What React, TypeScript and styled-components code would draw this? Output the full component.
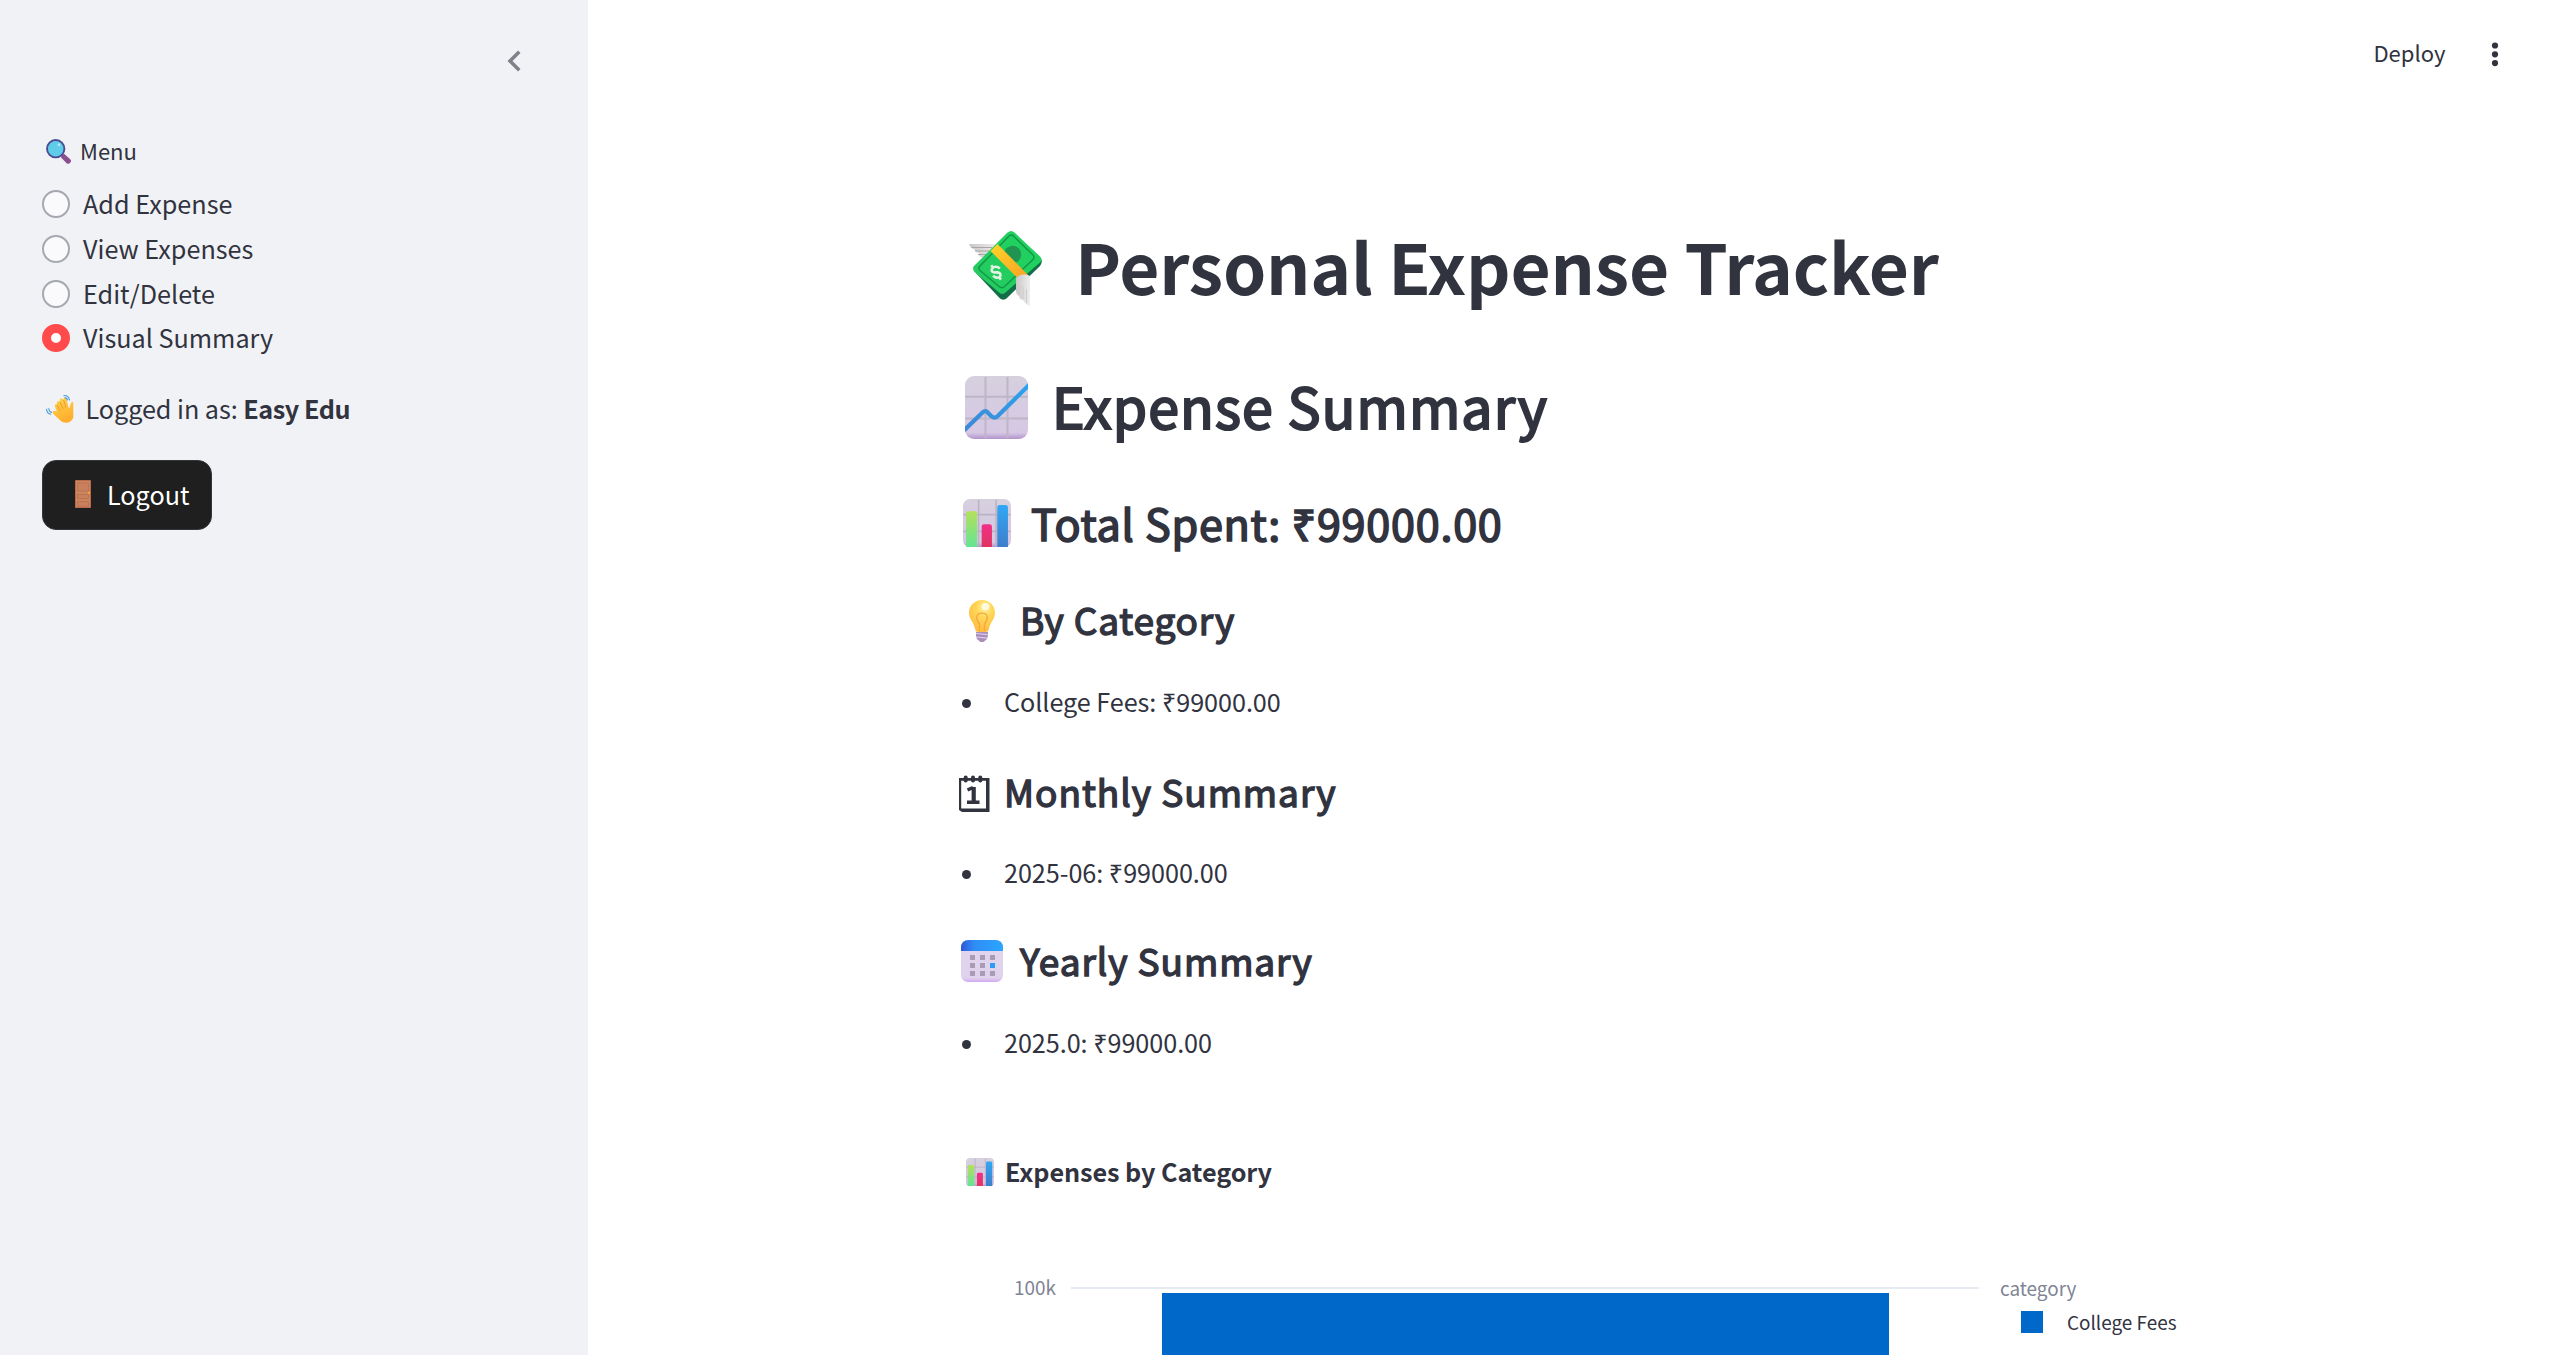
import React from 'react';
import styled, { createGlobalStyle } from 'styled-components';

const GlobalStyle = createGlobalStyle`
  * { box-sizing: border-box; }
  body {
    margin: 0;
    background: #ffffff;
    color: #31333f;
    font-family: "Noto Sans CJK JP", "Noto Sans", sans-serif;
    overflow: hidden;
  }
`;

const Page = styled.div`
  display: flex;
  height: 1355px;
  overflow: hidden;
`;

const Sidebar = styled.aside`
  display: flex;
  flex-direction: column;
  flex: none;
  width: 588px;
  padding: 42px;
  background: #f0f2f6;
`;

const SidebarHeader = styled.div`
  display: flex;
  justify-content: flex-end;
  height: 91px;
  padding: 8px 25px 0 0;
`;

const MenuLabel = styled.div`
  display: flex;
  height: 36px;
  font-size: 22.05px;
  line-height: 35px;
`;

const RadioGroup = styled.div`
  display: flex;
  flex-direction: column;
  margin-top: 13px;
`;

const RadioRow = styled.label`
  display: flex;
  align-items: center;
  height: 44.7px;
  gap: 13px;
  font-size: 25.2px;
  line-height: 42px;
`;

const RadioName = styled.span`
  padding-bottom: 2px;
`;

const RadioDot = styled.span<{ $checked?: boolean }>`
  width: 28px;
  height: 28px;
  border-radius: 50%;
  border: ${(p) => (p.$checked ? '9px solid #ff4b4b' : '2px solid #a6a8b0')};
  background: ${(p) => (p.$checked ? '#ffffff' : '#fafafc')};
`;

const LoggedIn = styled.div`
  display: flex;
  margin-top: 26px;
  height: 44px;
  font-size: 25.2px;
  line-height: 43px;
  letter-spacing: -0.002em;
  white-space: pre;
`;

const UserName = styled.b`
  letter-spacing: -0.018em;
`;

const LogoutButton = styled.button`
  display: flex;
  width: 170px;
  height: 70px;
  margin-top: 29px;
  padding: 0;
  border: 1.5px solid #35363a;
  border-radius: 14px;
  background: #1f1f1f;
  color: #ffffff;
  font-family: inherit;
  font-size: 25.2px;
  line-height: 66px;
`;

const Main = styled.main`
  display: flex;
  flex-direction: column;
  flex: 1;
`;

const TopBar = styled.header`
  display: flex;
  flex: none;
  justify-content: flex-end;
  height: 105px;
  padding: 34px 60.5px 0 0;
  font-size: 22.05px;
  line-height: 37px;
`;

const Content = styled.section`
  display: flex;
  flex-direction: column;
  flex: none;
  width: 1232px;
  margin-left: 369px;
  padding-top: 114px;
`;

const Glyph = styled.span<{ $top?: number; $left?: number; $right?: number }>`
  display: block;
  flex: none;
  margin: ${(p) => p.$top ?? 0}px ${(p) => p.$right ?? 0}px 0 ${(p) => p.$left ?? 0}px;
  line-height: 0;
  svg { display: block; overflow: visible; }
`;

const Heading = styled.div<{ $size: number; $line: number; $mt?: number; $bold?: boolean; $track?: number }>`
  display: flex;
  height: ${(p) => p.$line}px;
  margin-top: ${(p) => p.$mt ?? 0}px;
  font-size: ${(p) => p.$size}px;
  line-height: ${(p) => p.$line}px;
  font-weight: ${(p) => (p.$bold ? 700 : 400)};
  -webkit-text-stroke: ${(p) => (p.$bold ? '0' : '0.038em #31333f')};
  letter-spacing: ${(p) => p.$track ?? 0}em;
  white-space: pre;
`;

const List = styled.ul<{ $mt: number }>`
  margin: ${(p) => p.$mt}px 0 0;
  padding: 0;
  list-style: none;
`;

const Item = styled.li`
  display: flex;
  align-items: center;
  height: 44px;
  padding-left: 4.5px;
  gap: 33px;
  font-size: 25.2px;
  letter-spacing: -0.002em;
  line-height: 44px;
  &::before {
    content: "";
    width: 9.5px;
    height: 9.5px;
    margin-top: 5px;
    border-radius: 50%;
    background: #31333f;
  }
`;

const Chart = styled.div`
  display: flex;
  height: 90px;
  margin-top: 85px;
  font-size: 18.9px;
  line-height: 28px;
  color: #808495;
`;

const AxisLabel = styled.div`
  width: 114px;
  padding-right: 15px;
  text-align: right;
`;

const Plot = styled.div`
  width: 908px;
  height: 90px;
  margin-top: 14px;
  border-top: 2px solid #e6eaf1;
  padding: 4px 90px 0 91px;
`;

const Bar = styled.div`
  height: 80px;
  background: #0068c9;
`;

const Legend = styled.div`
  margin: 1px 0 0 21px;
`;

const LegendRow = styled.div`
  display: flex;
  align-items: center;
  height: 28px;
  margin-top: 6px;
  padding-left: 21px;
  gap: 24px;
  color: #31333f;
`;

const Swatch = styled.span`
  width: 22px;
  height: 22px;
  background: #0068c9;
  margin-top: -1px;
`;

const Magnifier = () => (
  <svg width="25" height="25" viewBox="0 0 25 25">
    <path d="M15.500 16.500 18 14.800l6 5.200a2.600 2.600 0 0 1-3.600 4L15 18.600z" fill="#8b4f8f" />
    <circle cx="9.700" cy="9.700" r="8.700" fill="#5fcdea" stroke="#4c4a91" strokeWidth="1.900" />
    <circle cx="13" cy="5.800" r="1.400" fill="#b4ecfb" />
  </svg>
);

const Wave = () => (
  <svg width="28" height="28" viewBox="0 0 28 28">
    <defs>
      <linearGradient id="hand" x1="0" y1="0" x2="0.4" y2="1">
        <stop offset="0" stopColor="#ffd54a" />
        <stop offset="1" stopColor="#ffae2e" />
      </linearGradient>
    </defs>
    <path d="M27.300 7.200c-1.800-1-2.800.8-3.500 5.200l-1.200.3-2-8.700c-.8-2.300-3.300-1.600-3.100.5l-1.400-.8c-1.900-.8-3 1-2.100 2.800l-1.600-.3c-1.700 0-2 1.600-1.300 3.100-1.600-.7-2.900.8-2 2.600l1.700 4.500-1.900-.4c-2.400-.4-2.900 1.700-1.200 3.300l7.700 7.100c4.700 3 10.100 1.200 11.900-3.800z" fill="url(#hand)" />
    <path d="m17.600 5 2.400 7.700M13.900 7l3.300 7M11.100 10l3.200 6" stroke="#e8912b" strokeWidth="0.800" fill="none" />
    <path d="M17.500.6c3.200-.3 5.600 1.600 6.100 4.800M18.600 2.600c1.800 0 2.600 1 3 2.800M.6 13.700c-.1 3.200 1.500 5.200 4.600 5.600M2.800 13.200c0 2.400 1.200 3.800 3.200 4.200" stroke="#4a9bd8" strokeWidth="1.100" fill="none" />
  </svg>
);

const Door = () => (
  <svg width="16" height="28" viewBox="0 0 16 28">
    <rect width="16" height="28" rx="0.8" fill="#b8694a" />
    <rect x="1" y="1" width="14" height="26" fill="#cd8560" />
    <path d="M2.600 2.800h10.800v8.200H2.600zM2.600 14.600h10.800v4H2.600zM2.600 21.600h10.800v4.600H2.600z" fill="#c9805d" stroke="#b46d4d" strokeWidth="0.700" />
    <circle cx="14" cy="12.800" r="1.100" fill="#ffa726" />
  </svg>
);

const Money = () => (
  <svg width="73" height="75" viewBox="0 0 73 75">
    <defs>
      <linearGradient id="wing" x1="0" y1="0" x2="1" y2="0">
        <stop offset="0" stopColor="#c9c6c6" />
        <stop offset="1" stopColor="#f0eeee" />
      </linearGradient>
      <linearGradient id="band" x1="0" y1="0" x2="1" y2="1">
        <stop offset="0" stopColor="#ffd42a" />
        <stop offset="1" stopColor="#f9a124" />
      </linearGradient>
      <linearGradient id="note" x1="1" y1="0" x2="0" y2="1">
        <stop offset="0" stopColor="#1fd45f" />
        <stop offset="1" stopColor="#25c960" />
      </linearGradient>
    </defs>
    <path d="M0 13h28L14 27l-4-2v-3l-3-1-2-3-3-1z" fill="url(#wing)" />
    <path d="M3 16.500h20M6 20h14M9 23.500h8" stroke="#aaa6a6" strokeWidth="1.100" />
    <path d="M7 42 68 23l4.500 5.500c.6 3-.2 5-2 7L38 67c-2.500 2.200-5 2.200-7.500 0z" fill="#146c49" />
    <path d="M38.500 1.500c2.500-2 5-2 7 0L71 25.500c2 2 2 4 0 6L37 61c-2.500 2.500-5 2.500-7.500 0L5.500 41c-2-2.500-2-5 .5-7z" fill="url(#note)" />
    <path d="M40 5c2-1.500 3-1.500 4.500 0L64 24c1.500 1.700 1.500 3 0 4.500L35.500 55.500c-2 1.800-3.500 1.800-5.500 0L11 39.500c-1.500-1.500-1.500-3 0-4.500z" fill="none" stroke="#149447" strokeWidth="1.400" />
    <circle cx="43.500" cy="23.500" r="8.700" fill="#209451" />
    <path d="m28.500 13-7 7L50 48.500l9.500-4z" fill="url(#band)" />
    <path d="M47 47c3-3.500 8-4.500 14-2v30l-4-2-3-4-3-1-1-3c-2-1-3-3-3-6z" fill="url(#wing)" />
    <path d="M50.500 55v9M54 56v12M57.500 58v14" stroke="#cfcccc" strokeWidth="1.100" />
    <g transform="rotate(-12 27 42)">
      <path d="M31.500 38.500c-1.500-3-5.500-3.500-7.500-1.500-1.800 2.500.5 4.200 3 4.400 3.500.4 5 2.600 3.500 4.600-2.200 2-5.800.5-6.800-2M24 33.500l1.200 2.500M29 46.500l1.500 3" fill="none" stroke="#e4f3e4" strokeWidth="2.600" />
    </g>
  </svg>
);

const Tile = ({ id }: { id: string }) => (
  <>
    <defs>
      <linearGradient id={id} x1="0" y1="0" x2="0" y2="1">
        <stop offset="0" stopColor="#d6d0de" />
        <stop offset="0.9" stopColor="#d6c8e4" />
        <stop offset="1" stopColor="#b294cc" />
      </linearGradient>
    </defs>
    <rect width="63" height="63" rx="9" fill={`url(#${id})`} />
  </>
);

const LineChart = () => (
  <svg width="63" height="63" viewBox="0 0 63 63">
    <defs>
      <linearGradient id="trend" x1="0" y1="1" x2="1" y2="0">
        <stop offset="0" stopColor="#3f87d6" />
        <stop offset="1" stopColor="#2ba3ee" />
      </linearGradient>
      <clipPath id="tileClip"><rect width="63" height="63" rx="9" /></clipPath>
    </defs>
    <Tile id="tileLine" />
    <path d="M20.500 1v61M42.500 1v61M0 20.800h63M0 42.500h63" stroke="#bdb6c6" strokeWidth="2" />
    <path d="M-2 55.500 18 36q2-1.800 4.200 0l4.300 4.300q3.300 2.500 6 0L65 8" fill="none" stroke="url(#trend)" strokeWidth="4.200" clipPath="url(#tileClip)" />
  </svg>
);

const BarChart = ({ id, size }: { id: string; size: number }) => (
  <svg width={size} height={size} viewBox="0 0 63 63">
    <defs>
      <linearGradient id={`${id}g`} x1="0" y1="0" x2="0" y2="1">
        <stop offset="0" stopColor="#b4e05a" />
        <stop offset="1" stopColor="#63e495" />
      </linearGradient>
      <linearGradient id={`${id}r`} x1="0" y1="0" x2="0" y2="1">
        <stop offset="0" stopColor="#f0308a" />
        <stop offset="1" stopColor="#e0345f" />
      </linearGradient>
      <linearGradient id={`${id}b`} x1="0" y1="0" x2="0" y2="1">
        <stop offset="0" stopColor="#30a8f5" />
        <stop offset="1" stopColor="#3f7dcb" />
      </linearGradient>
    </defs>
    <Tile id={`${id}t`} />
    <path d="M20.500 1v61M43.500 1v61M0 20.500h63M0 42.500h63" stroke="#b9b2c2" strokeWidth="2" />
    <path d="M4 63V19q0-3 3-3h8.500q3 0 3 3v44z" fill={`url(#${id}g)`} />
    <path d="M24.500 63V36q0-3 3-3H35q3 0 3 3v27z" fill={`url(#${id}r)`} />
    <path d="M45 63V11q0-3 3-3h8q3 0 3 3v52z" fill={`url(#${id}b)`} />
  </svg>
);

const Bulb = () => (
  <svg width="26" height="42" viewBox="0 0 26 42">
    <defs>
      <radialGradient id="bulb" cx="0.6" cy="0.25" r="0.8">
        <stop offset="0" stopColor="#fff3b0" />
        <stop offset="0.35" stopColor="#ffd95a" />
        <stop offset="1" stopColor="#ffb83d" />
      </radialGradient>
    </defs>
    <path d="M13 0c7.500 0 13 5.500 13 13 0 6-4.500 8.500-6 15.500-.4 2.500-1.500 3.500-3.500 3.500h-7c-2 0-3.100-1-3.500-3.500C4.500 21.500 0 19 0 13 0 5.500 5.500 0 13 0z" fill="url(#bulb)" />
    <path d="M10.500 31v-7C8 21 7.500 19 7.800 16.500c.8-4.500 9.600-4.500 10.400 0 .3 2.500-.2 4.500-2.700 7.500v7" fill="none" stroke="#f5a742" strokeWidth="1.300" />
    <ellipse cx="16.500" cy="6.500" rx="4" ry="3.600" fill="#fffbe6" opacity="0.9" />
    <path d="M7 32h12v3.500l-1 3.500-3.500 3h-3L8 39l-1-3.500z" fill="#a98dbd" />
    <path d="m7 33.500 12 1.200M7.500 37l11 1.200" stroke="#dbcfe3" strokeWidth="1.200" />
  </svg>
);

const DayPad = () => (
  <svg width="31" height="36" viewBox="0 0 31 36">
    <path d="M0 2h30.500v34H3L0 34zM2.200 4.800v27.700H27V4.800z" fill="#31333f" fillRule="evenodd" />
    <path d="M6.700 1.500v3M14 1.500v3M21.300 1.500v3" stroke="#31333f" strokeWidth="4" strokeLinecap="round" />
    <path d="M8.500 14 14 11.500M14.300 11v15M8 26.200h12.500" stroke="#31333f" strokeWidth="3.400" fill="none" />
    <path d="M15.300 11v15" stroke="#31333f" strokeWidth="3" />
  </svg>
);

const Calendar = () => (
  <svg width="42" height="42" viewBox="0 0 42 42">
    <defs>
      <linearGradient id="calTop" x1="0" y1="0" x2="1" y2="0">
        <stop offset="0" stopColor="#2f56d6" />
        <stop offset="0.3" stopColor="#2f8cf5" />
        <stop offset="1" stopColor="#2ba6ff" />
      </linearGradient>
      <linearGradient id="calBody" x1="0" y1="0" x2="0" y2="1">
        <stop offset="0" stopColor="#e2d6ee" />
        <stop offset="0.9" stopColor="#dfd2ec" />
        <stop offset="1" stopColor="#d2a9f0" />
      </linearGradient>
    </defs>
    <rect width="42" height="42" rx="7" fill="url(#calBody)" />
    <path d="M0 11V8q0-8 8-8h26q8 0 8 8v3z" fill="url(#calTop)" />
    <path d="M9 15h5v5H9zM19 15h5v5h-5zM29 15h5v5h-5zM9 23h5v5H9zM19 23h5v5h-5zM9 31h5v5H9zM19 31h5v5h-5zM29 31h5v5h-5z" fill="#a99bb5" />
    <path d="M29 23h5v5h-5z" fill="#2f9bf5" />
  </svg>
);

const options = ['Add Expense', 'View Expenses', 'Edit/Delete', 'Visual Summary'];

export default function App() {
  return (
    <Page>
      <GlobalStyle />
      <Sidebar>
        <SidebarHeader>
          <Glyph>
            <svg width="14" height="22" viewBox="0 0 14 22">
              <path d="M12.300 1.800 3 11l9.300 9.200" fill="none" stroke="#808289" strokeWidth="3.600" />
            </svg>
          </Glyph>
        </SidebarHeader>
        <MenuLabel>
          <Glyph $top={6} $left={4} $right={9}><Magnifier /></Glyph>
          Menu
        </MenuLabel>
        <RadioGroup>
          {options.map((name) => (
            <RadioRow key={name}>
              <RadioDot $checked={name === 'Visual Summary'} />
              <RadioName>{name}</RadioName>
            </RadioRow>
          ))}
        </RadioGroup>
        <LoggedIn>
          <Glyph $top={8} $left={4} $right={11.5}><Wave /></Glyph>
          Logged in as: <UserName>Easy Edu</UserName>
        </LoggedIn>
        <LogoutButton>
          <Glyph $top={19} $left={32} $right={16}><Door /></Glyph>
          Logout
        </LogoutButton>
      </Sidebar>
      <Main>
        <TopBar>
          Deploy
          <Glyph $top={8} $left={45}>
            <svg width="8" height="24" viewBox="0 0 8 24">
              <circle cx="4" cy="3.500" r="3.100" fill="#31333f" />
              <circle cx="4" cy="12.300" r="3.100" fill="#31333f" />
              <circle cx="4" cy="21.100" r="3.100" fill="#31333f" />
            </svg>
          </Glyph>
        </TopBar>
        <Content>
          <Heading $size={69.3} $line={92} $bold $track={-0.003}>
            <Glyph $top={12} $left={12} $right={33}><Money /></Glyph>
            Personal Expense Tracker
          </Heading>
          <Heading $size={55.4} $line={76} $mt={56} $track={0.021}>
            <Glyph $top={9} $left={8} $right={24}><LineChart /></Glyph>
            Expense Summary
          </Heading>
          <Heading $size={43.1} $line={58} $mt={50} $track={0.018}>
            <Glyph $top={6} $left={6} $right={20}><BarChart id="total" size={48} /></Glyph>
            Total Spent: ₹99000.00
          </Heading>
          <Heading $size={37} $line={50} $mt={43} $track={0.022}>
            <Glyph $top={6} $left={12} $right={25}><Bulb /></Glyph>
            By Category
          </Heading>
          <List $mt={35}><Item>College Fees: ₹99000.00</Item></List>
          <Heading $size={37} $line={50} $mt={43} $track={0.026}>
            <Glyph $top={10} $left={2} $right={14}><DayPad /></Glyph>
            Monthly Summary
          </Heading>
          <List $mt={34}><Item>2025-06: ₹99000.00</Item></List>
          <Heading $size={37} $line={50} $mt={41} $track={0.025}>
            <Glyph $top={5} $left={4} $right={17}><Calendar /></Glyph>
            Yearly Summary
          </Heading>
          <List $mt={35}><Item>2025.0: ₹99000.00</Item></List>
          <Heading $size={25.2} $line={34} $mt={90} $bold $track={-0.003}>
            <Glyph $top={4} $left={9} $right={11}><BarChart id="cat" size={28} /></Glyph>
            Expenses by Category
          </Heading>
          <Chart>
            <AxisLabel>100k</AxisLabel>
            <Plot><Bar /></Plot>
            <Legend>
              category
              <LegendRow><Swatch />College Fees</LegendRow>
            </Legend>
          </Chart>
        </Content>
      </Main>
    </Page>
  );
}
